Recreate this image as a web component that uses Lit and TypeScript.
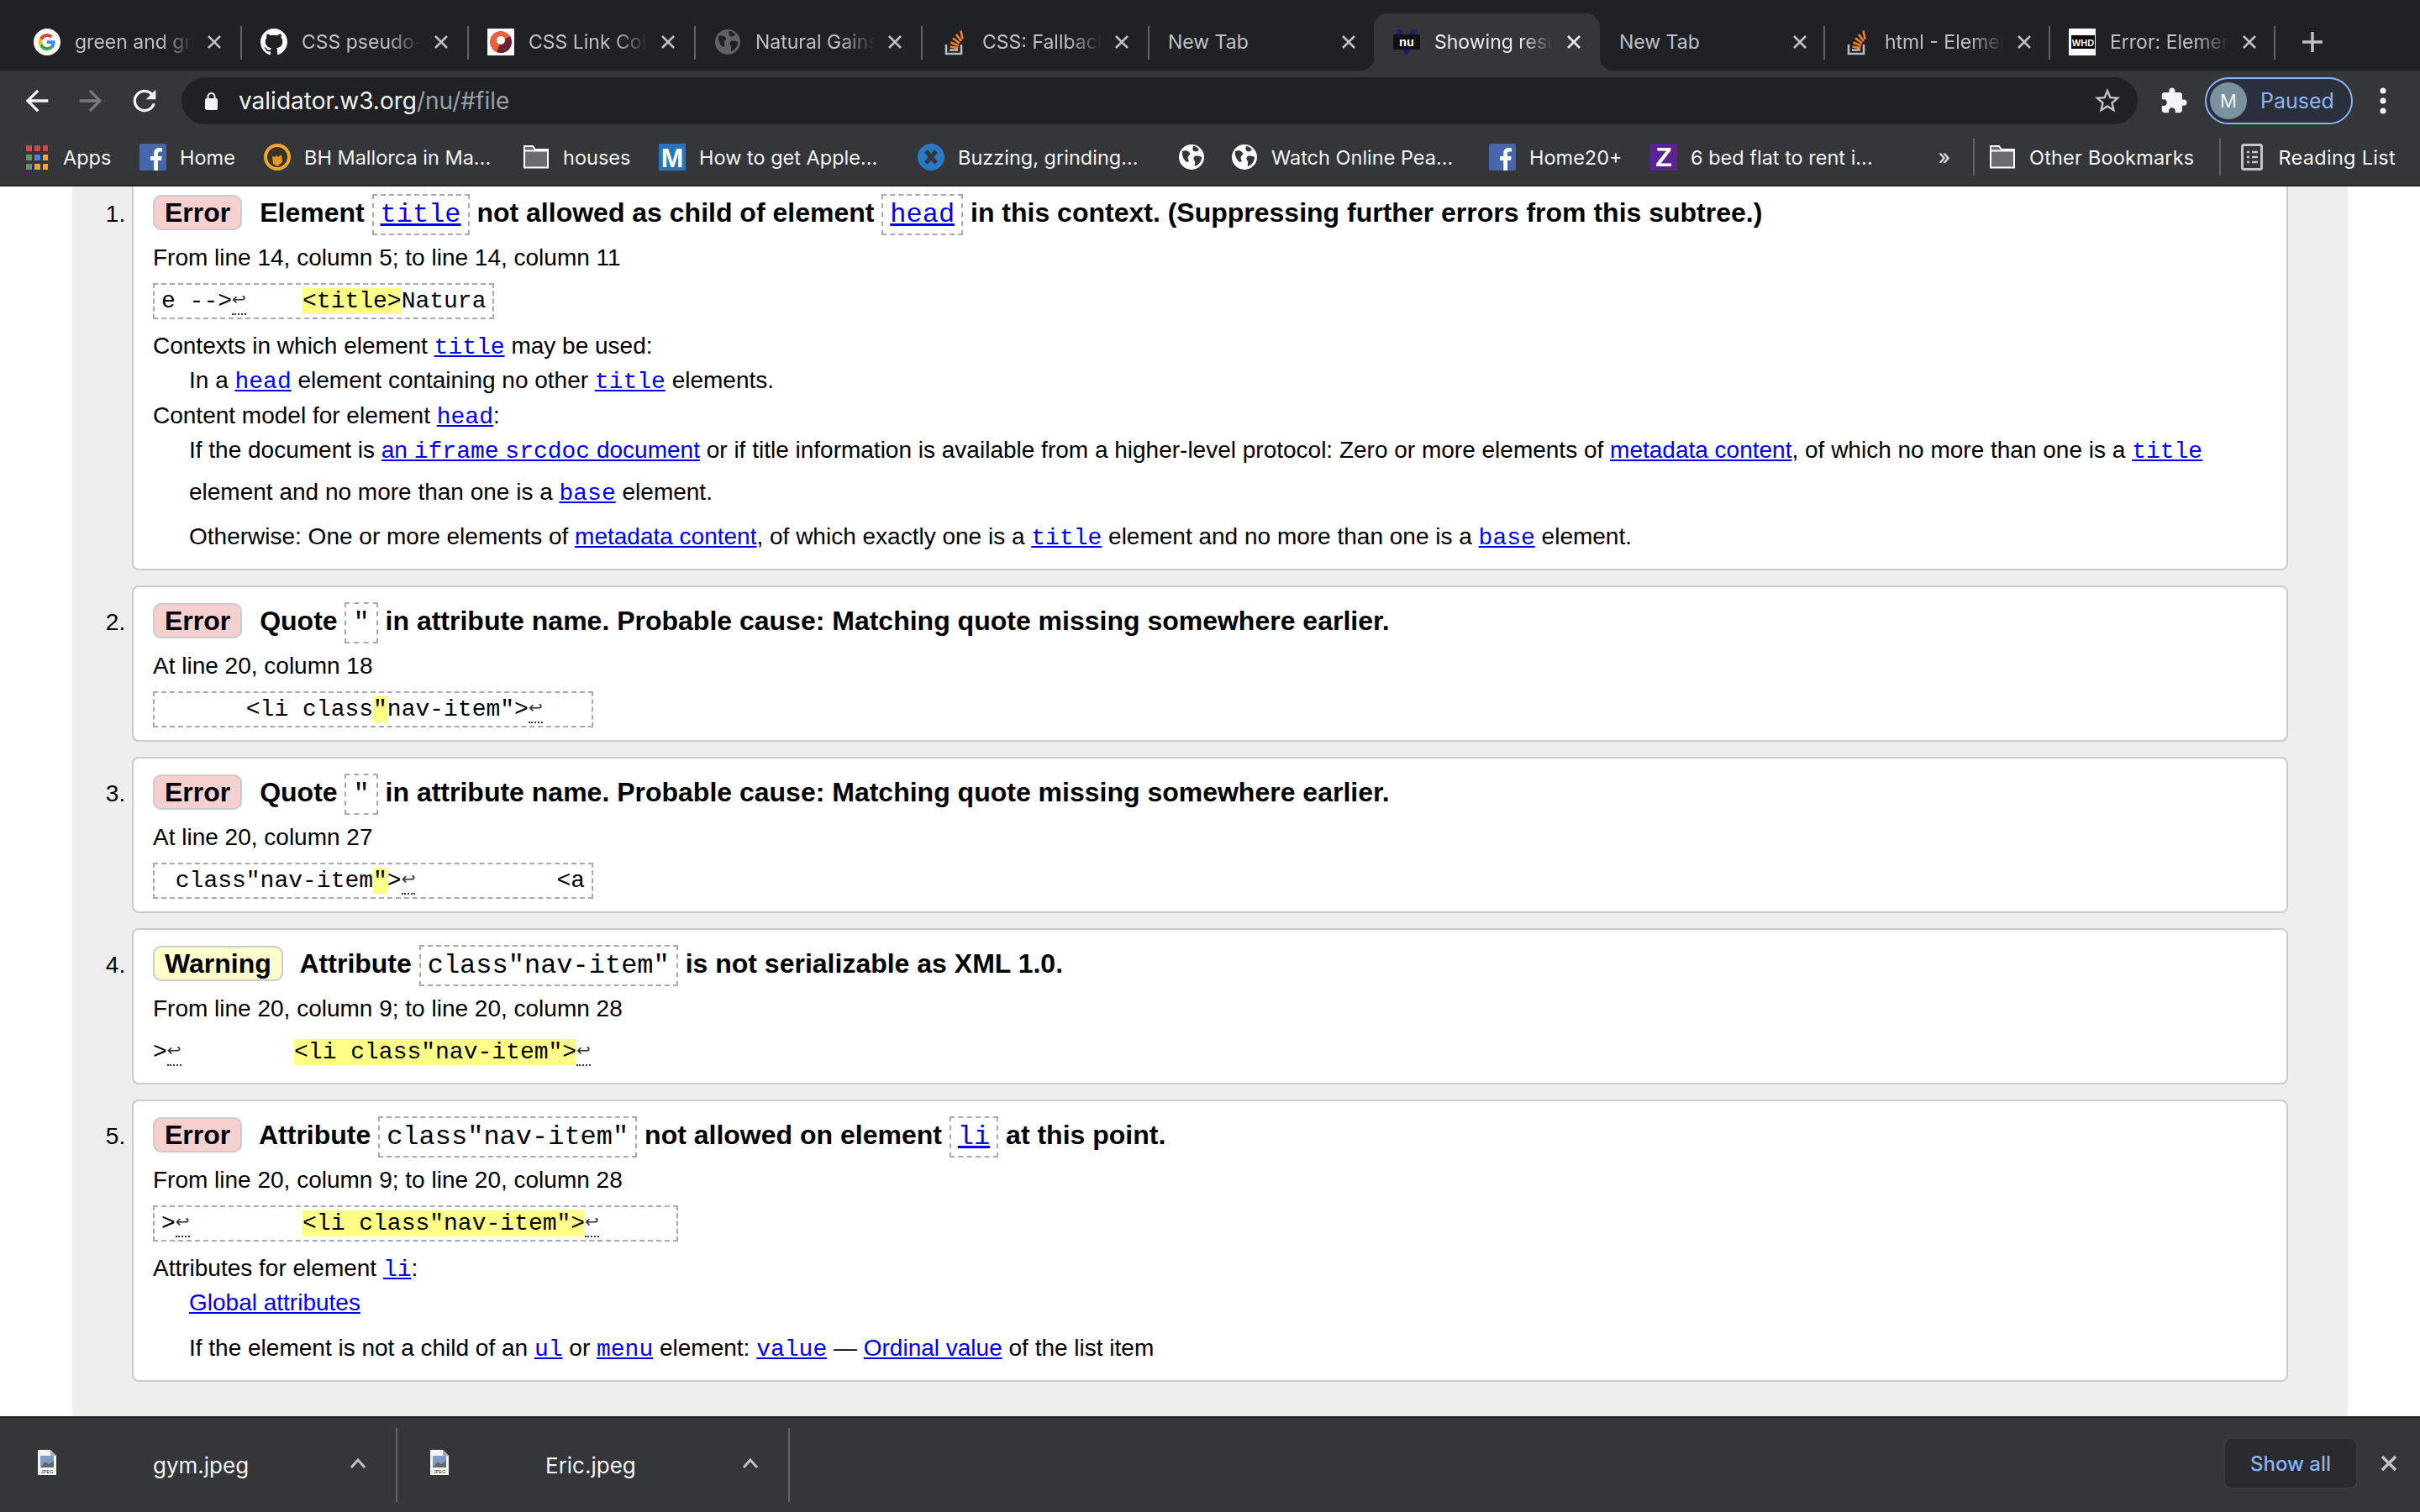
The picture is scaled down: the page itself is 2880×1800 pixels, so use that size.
import { LitElement, html, css, nothing, TemplateResult } from "lit";
import { customElement } from "lit/decorators.js";

const globe = (fill: string, land: string) => html`<svg class="fav" viewBox="0 0 32 32">
  <circle cx="16" cy="16" r="15" fill=${fill}></circle>
  <path d="M5 9c3-1 6-1 8 1 2 2 1 4-1 5-1 2 0 4 1 6l-3 1c-3-3-6-8-5-13zM18 3c3 0 5 2 7 4-1 2-4 3-6 2-2-1-2-4-1-6zM20 15c3-1 6 0 8 1 0 4-2 8-6 10l-2 1c-1-2 1-4 0-6-2-2-2-5 0-6z" fill=${land}></path>
</svg>`;

const fbIcon = html`<svg class="fav" viewBox="0 0 32 32">
  <rect width="32" height="32" rx="2" fill="#4867aa"></rect>
  <path d="M22 32V20h4l.6-5H22v-3c0-1.500.5-2.400 2.500-2.400H27V5.200c-.5-.1-2-.2-3.600-.2-3.600 0-6.100 2.200-6.100 6.200V15H13v5h4.300v12z" fill="#fff"></path>
</svg>`;

const folderIcon = html`<svg class="fav" viewBox="0 0 32 32">
  <path d="M2 7V28.500H30V7H15L12 3H2z" fill="#6b6c6f" stroke="#fff" stroke-width="2"></path>
  <path d="M2 8.500H30" stroke="#fff" stroke-width="2"></path>
</svg>`;

const soIcon = html`<svg class="fav" viewBox="0 0 32 32">
  <path d="M6 19v11h18V19" fill="none" stroke="#bcbbbb" stroke-width="2.600"></path>
  <path d="M10 25.500h10" stroke="#bcbbbb" stroke-width="2.600"></path>
  <path d="M10.500 21.500l9.800 1.600M11.500 16.500l9.200 3.800M14 11.500l8 6M18 7l6 8M23.500 2.500l2 10" fill="none" stroke="#f48024" stroke-width="2.600"></path>
</svg>`;

const tabIcons: Record<string, TemplateResult> = {
  google: html`<svg class="fav" viewBox="0 0 32 32">
    <circle cx="16" cy="16" r="16" fill="#fff"></circle>
    <g transform="translate(6 6) scale(.417)">
      <path fill="#ea4335" d="M24 9.500c3.540 0 6.710 1.220 9.210 3.600l6.850-6.850C35.900 2.380 30.470 0 24 0 14.620 0 6.510 5.380 2.560 13.220l7.980 6.190C12.430 13.720 17.740 9.500 24 9.500z"></path>
      <path fill="#4285f4" d="M46.980 24.550c0-1.570-.15-3.090-.38-4.550H24v9.020h12.940c-.58 2.960-2.260 5.480-4.780 7.180l7.730 6c4.510-4.180 7.090-10.360 7.090-17.650z"></path>
      <path fill="#fbbc05" d="M10.530 28.590c-.48-1.450-.76-2.990-.76-4.590s.27-3.140.76-4.590l-7.980-6.190C.92 16.460 0 20.120 0 24c0 3.880.92 7.540 2.560 10.780l7.970-6.190z"></path>
      <path fill="#34a853" d="M24 48c6.480 0 11.930-2.130 15.890-5.810l-7.730-6c-2.150 1.450-4.920 2.300-8.160 2.300-6.260 0-11.570-4.220-13.470-9.910l-7.980 6.190C6.510 42.620 14.620 48 24 48z"></path>
    </g>
  </svg>`,
  github: html`<svg class="fav" viewBox="0 0 16 16">
    <path fill="#fff" d="M8 0C3.580 0 0 3.580 0 8c0 3.540 2.290 6.530 5.470 7.590.4.070.55-.17.55-.38 0-.19-.01-.82-.01-1.490-2.010.37-2.530-.49-2.690-.94-.09-.23-.48-.94-.82-1.130-.28-.15-.68-.52-.01-.53.63-.01 1.080.58 1.230.82.720 1.210 1.870.87 2.330.66.070-.52.28-.87.51-1.070-1.780-.2-3.640-.89-3.640-3.950 0-.87.31-1.590.82-2.150-.08-.2-.36-1.020.08-2.120 0 0 .67-.21 2.200.82.64-.18 1.320-.27 2-.27.68 0 1.360.09 2 .27 1.530-1.040 2.200-.82 2.200-.82.44 1.100.16 1.920.08 2.120.51.56.82 1.270.82 2.150 0 3.070-1.870 3.750-3.650 3.950.29.25.54.73.54 1.480 0 1.070-.01 1.930-.01 2.200 0 .21.15.46.55.38A8.013 8.013 0 0016 8c0-4.420-3.580-8-8-8z"></path>
  </svg>`,
  ring: html`<svg class="fav" viewBox="0 0 32 32">
    <rect width="32" height="32" fill="#fff"></rect>
    <circle cx="16" cy="16" r="13" fill="#ec5f3d"></circle>
    <path d="M27 9a13 13 0 0 1-16 19l5-12z" fill="#6b2237"></path>
    <circle cx="16" cy="14" r="5" fill="#fff"></circle>
  </svg>`,
  globe: globe("#5f6368", "#202124"),
  so: soIcon,
  nu: html`<svg class="fav" viewBox="0 0 32 32">
    <path d="M3 1h7l6 16 6-16h7L18 31h-4z" fill="#1f2064"></path>
    <rect x="0" y="7" width="32" height="18" rx="2" fill="#101014"></rect>
    <text x="16" y="21" class="nu">nu</text>
  </svg>`,
  whd: html`<svg class="fav" viewBox="0 0 32 32">
    <rect width="32" height="32" fill="#fff"></rect>
    <rect x="3" y="8" width="28" height="16" fill="#000"></rect>
    <text x="17" y="21" class="whd">WHD</text>
  </svg>`,
};

const bookmarkIcons: Record<string, TemplateResult> = {
  apps: html`<svg class="apps" viewBox="0 0 26 32">
    <path fill="#d9453a" d="M0 2h7v7H0zM10 2h7v7h-7zM20 2h6v7h-6z"></path>
    <path fill="#5a9a68" d="M0 13h7v7H0zM0 24h7v7H0z"></path>
    <path fill="#4285f4" d="M10 13h7v7h-7z"></path>
    <path fill="#f0a32f" d="M20 13h6v7h-6zM10 24h7v7h-7zM20 24h6v7h-6z"></path>
  </svg>`,
  fb: fbIcon,
  bh: html`<svg class="fav" viewBox="0 0 32 32">
    <circle cx="16" cy="16" r="14" fill="#3b3329" stroke="#efa92a" stroke-width="4"></circle>
    <path d="M10 15l3 1 2-2 2 2 4-3 1 9-6 5-5-3z" fill="#e29a25"></path>
  </svg>`,
  folder: folderIcon,
  m: html`<svg class="fav" viewBox="0 0 32 32">
    <rect width="32" height="32" fill="#2a74b8"></rect>
    <text x="16" y="28" class="bm">M</text>
  </svg>`,
  x: html`<svg class="fav" viewBox="0 0 32 32">
    <circle cx="16" cy="16" r="16" fill="#2a79c4"></circle>
    <path d="M10 9l12 14M22 9L10 23" stroke="#35363a" stroke-width="5"></path>
  </svg>`,
  globe: globe("#fff", "#35363a"),
  z: html`<svg class="fav" viewBox="0 0 32 32">
    <rect width="32" height="32" fill="#5a2490"></rect>
    <text x="16" y="27" class="bz">Z</text>
  </svg>`,
};

const readingIcon = html`<svg class="fav" viewBox="0 0 26 32">
  <rect x="1.500" y="1.500" width="23" height="29" rx="2" fill="#35363a" stroke="#c4c7c9" stroke-width="3"></rect>
  <path d="M7 10h3M13 10h7M7 16h3M13 16h7M7 22h3M13 22h7" stroke="#c4c7c9" stroke-width="2.500"></path>
</svg>`;

const fileIcon = html`<svg class="file" viewBox="0 0 22 30">
  <path d="M0 0h15l7 7v23H0z" fill="#f4f4f4"></path>
  <path d="M15 0v7h7z" fill="#aaa"></path>
  <rect x="3" y="7" width="16" height="14" fill="#7d9cc4"></rect>
  <path d="M3 21l6-7 4 3 6-4v8z" fill="#666"></path>
  <text x="11" y="28" class="jpeg">JPEG</text>
</svg>`;

const caret = html`<svg class="caret" viewBox="0 0 20 14">
  <path d="M2 12l8-9 8 9" fill="none" stroke="#bdc1c6" stroke-width="3"></path>
</svg>`;

const closeX = html`<svg class="x" viewBox="0 0 22 22">
  <path d="M4 4l14 14M18 4L4 18" fill="none" stroke="currentColor" stroke-width="2.600"></path>
</svg>`;

const TABS = [
  { icon: "google", title: "green and green" },
  { icon: "github", title: "CSS pseudo-classes" },
  { icon: "ring", title: "CSS Link Color" },
  { icon: "globe", title: "Natural Gains" },
  { icon: "so", title: "CSS: Fallback fonts" },
  { title: "New Tab", plain: true },
  { icon: "nu", title: "Showing results", active: true },
  { title: "New Tab", plain: true, sep: true },
  { icon: "so", title: "html - Element" },
  { icon: "whd", title: "Error: Element" },
];

// widths are the distance to the next bookmark, the bar does not wrap
const BOOKMARKS = [
  { icon: "apps", label: "Apps", w: 135 },
  { icon: "fb", label: "Home", w: 148 },
  { icon: "bh", label: "BH Mallorca in Ma...", w: 308 },
  { icon: "folder", label: "houses", w: 162 },
  { icon: "m", label: "How to get Apple...", w: 308 },
  { icon: "x", label: "Buzzing, grinding...", w: 310 },
  { icon: "globe", label: "", w: 63 },
  { icon: "globe", label: "Watch Online Pea...", w: 307 },
  { icon: "fb", label: "Home20+", w: 192 },
  { icon: "z", label: "6 bed flat to rent i...", w: 300 },
];

interface Message {
  kind: "Error" | "Warning";
  text: TemplateResult;
  where: string;
  extract: string;
  plain?: boolean;
  more?: TemplateResult;
}

const c = (t: string) => html`<code class="box">${t}</code>`;
const cl = (t: string) => html`<code class="box"><a href="#">${t}</a></code>`;
const m = (t: string) => html`<a class="mono" href="#">${t}</a>`;
const a = (t: string) => html`<a href="#">${t}</a>`;

const MESSAGES: Message[] = [
  {
    kind: "Error",
    text: html`Element ${cl("title")} not allowed as child of element ${cl("head")} in this context. (Suppressing further errors from this subtree.)`,
    where: "From line 14, column 5; to line 14, column 11",
    extract: "e -->~    {<title>}Natura",
    more: html`
      <div class="dt">Contexts in which element ${m("title")} may be used:</div>
      <div class="dd">In a ${m("head")} element containing no other ${m("title")} elements.</div>
      <div class="dt">Content model for element ${m("head")}:</div>
      <div class="dd tall">If the document is <a href="#">an <span class="mono">iframe</span> <span class="mono">srcdoc</span> document</a> or if title information is available from a higher-level protocol: Zero or more elements of ${a("metadata content")}, of which no more than one is a ${m("title")} element and no more than one is a ${m("base")} element.</div>
      <div class="dd after-tall">Otherwise: One or more elements of ${a("metadata content")}, of which exactly one is a ${m("title")} element and no more than one is a ${m("base")} element.</div>
    `,
  },
  {
    kind: "Error",
    text: html`Quote ${c('"')} in attribute name. Probable cause: Matching quote missing somewhere earlier.`,
    where: "At line 20, column 18",
    extract: '      <li class{"}nav-item">~   ',
  },
  {
    kind: "Error",
    text: html`Quote ${c('"')} in attribute name. Probable cause: Matching quote missing somewhere earlier.`,
    where: "At line 20, column 27",
    extract: ' class"nav-item{"}>~          <a',
  },
  {
    kind: "Warning",
    text: html`Attribute ${c('class"nav-item"')} is not serializable as XML 1.0.`,
    where: "From line 20, column 9; to line 20, column 28",
    extract: '>~        {<li class"nav-item">}~',
    plain: true,
  },
  {
    kind: "Error",
    text: html`Attribute ${c('class"nav-item"')} not allowed on element ${cl("li")} at this point.`,
    where: "From line 20, column 9; to line 20, column 28",
    extract: '>~        {<li class"nav-item">}~     ',
    more: html`
      <div class="dt">Attributes for element ${m("li")}:</div>
      <div class="dd">${a("Global attributes")}</div>
      <div class="dd spaced">If the element is not a child of an ${m("ul")} or ${m("menu")} element: ${m("value")} — ${a("Ordinal value")} of the list item</div>
    `,
  },
];

@customElement("app-root")
export class AppRoot extends LitElement {
  static styles = css`
    :host {
      display: flex;
      flex-direction: column;
      height: 100vh;
      overflow: hidden;
      font-family: "Liberation Sans", Arial, sans-serif;
      background: #fff;
    }

    /* browser chrome */
    .tabstrip,
    .toolbar,
    .bookmarks,
    .downloads {
      flex: none;
      display: flex;
      font-family: Inter, "Liberation Sans", sans-serif;
    }
    .tabstrip {
      height: 84px;
      box-sizing: border-box;
      padding: 16px 0 0 17px;
      background: #202124;
      font-size: 23px;
      color: #bdc1c6;
    }
    .tab {
      flex: 0 0 268px;
      position: relative;
      display: flex;
      align-items: center;
      padding-left: 23px;
      box-sizing: border-box;
    }
    .tab:nth-child(-n + 5) {
      flex-basis: 270px;
    }
    .tab:nth-child(8) {
      flex-basis: 267px;
    }
    .tab.sep::after {
      content: "";
      position: absolute;
      right: -1px;
      top: 15px;
      bottom: 13px;
      width: 2px;
      background: #5f6368;
    }
    .tab.active {
      flex-basis: 269px;
      background: #35363a;
      border-radius: 16px 16px 0 0;
      color: #e8eaed;
    }
    .tab.active::before,
    .tab.active::after {
      content: "";
      position: absolute;
      bottom: 0;
      width: 16px;
      height: 16px;
    }
    .tab.active::before {
      left: -16px;
      background: radial-gradient(circle at 0 0, transparent 16px, #35363a 16.5px);
    }
    .tab.active::after {
      right: -16px;
      background: radial-gradient(circle at 100% 0, transparent 16px, #35363a 16.5px);
    }
    .fav {
      flex: none;
      width: 32px;
      height: 32px;
    }
    .tab .fav {
      margin-right: 17px;
    }
    .tab-title {
      width: 142px;
      white-space: nowrap;
      overflow: hidden;
      -webkit-mask-image: linear-gradient(to right, #000 72%, transparent 100%);
      mask-image: linear-gradient(to right, #000 72%, transparent 100%);
    }
    .tab.plain .tab-title {
      width: 191px;
      -webkit-mask-image: none;
      mask-image: none;
    }
    .x {
      flex: none;
      width: 22px;
      height: 22px;
      margin-left: 13px;
    }
    .plus {
      width: 28px;
      height: 28px;
      margin: 20px 0 0 31px;
    }
    .nu {
      font: bold 15px "Liberation Mono", monospace;
      fill: #fff;
      text-anchor: middle;
    }
    .whd {
      font: bold 11px "Liberation Sans", sans-serif;
      fill: #fff;
      text-anchor: middle;
    }
    .bm {
      font: bold 32px "Liberation Sans", sans-serif;
      fill: #fff;
      text-anchor: middle;
    }
    .bz {
      font: bold 32px "Liberation Sans", sans-serif;
      fill: #fff;
      text-anchor: middle;
    }
    .jpeg {
      font: 5.500px "Liberation Sans", sans-serif;
      fill: #333;
      text-anchor: middle;
    }

    .toolbar {
      height: 72px;
      box-sizing: border-box;
      padding: 8px 40px 8px 24px;
      align-items: stretch;
      background: #35363a;
    }
    .nav {
      width: 40px;
      height: 40px;
      align-self: center;
      margin-right: 24px;
      fill: #f1f3f4;
    }
    .nav.off {
      fill: #77797d;
    }
    .omnibox {
      flex: 1;
      display: flex;
      align-items: center;
      padding: 0 18px 0 28px;
      border-radius: 28px;
      background: #202124;
      font-size: 28px;
      color: #f1f3f4;
    }
    .lock {
      width: 15px;
      height: 22px;
      margin-right: 25px;
    }
    .host-path {
      color: #9aa0a6;
    }
    .star {
      width: 36px;
      height: 36px;
      margin-left: auto;
      fill: #bdc1c6;
    }
    .puzzle {
      width: 34px;
      height: 34px;
      align-self: center;
      margin: 0 20px 0 26px;
      fill: #f1f3f4;
    }
    .profile {
      width: 176px;
      box-sizing: border-box;
      display: flex;
      align-items: center;
      gap: 16px;
      padding-left: 4px;
      border: 2px solid #8ab4f8;
      border-radius: 28px;
      background: #2b2f3b;
      font-size: 25px;
      color: #8ab4f8;
    }
    .avatar {
      width: 44px;
      height: 44px;
      border-radius: 50%;
      background: #7b919e;
      color: #eef2f4;
      font-size: 22px;
      display: flex;
      align-items: center;
      justify-content: center;
    }
    .kebab {
      width: 8px;
      height: 32px;
      align-self: center;
      margin-left: 32px;
      fill: #f1f3f4;
    }

    .bookmarks {
      height: 66px;
      box-sizing: border-box;
      padding: 0 29px 2px 31px;
      align-items: center;
      background: #35363a;
      border-bottom: 2px solid #202124;
      font-size: 23.5px;
      color: #f1f3f4;
    }
    .bookmark {
      flex: none;
      display: flex;
      align-items: center;
      gap: 16px;
      white-space: nowrap;
    }
    .apps {
      width: 26px;
      height: 32px;
    }
    .bookmark .apps {
      margin-right: 2px;
    }
    .chevrons {
      margin-left: auto;
      font-size: 25px;
      color: #e8eaed;
    }
    .vsep {
      width: 2px;
      height: 44px;
      background: #5f6368;
    }
    .chevrons + .vsep {
      margin-left: 27px;
    }
    .bookmark.other {
      margin: 0 30px 0 17px;
      letter-spacing: 0.2px;
    }
    .bookmark.reading {
      margin-left: 24px;
      letter-spacing: 0.3px;
    }
    .bookmark.reading .fav {
      width: 26px;
      margin-right: 2px;
    }

    /* page */
    .viewport {
      flex: 1;
      min-height: 0;
      overflow: hidden;
    }
    .sheet {
      height: 100%;
      margin: 0 86px;
      background: #eee;
      overflow: hidden;
    }
    ol {
      margin: -11px 71px 0;
      padding: 0;
      font-size: 28px;
      line-height: 42px;
      color: #000;
    }
    li {
      margin-bottom: 18px;
      padding: 16px 24px 15px 23px;
      background: #fff;
      border: 2px solid #ccc;
      border-radius: 8px;
    }
    a {
      color: #00e;
    }
    .msg {
      margin: 0;
      height: 48px;
      font-size: 32px;
      font-weight: bold;
      line-height: 48px;
      white-space: nowrap;
    }
    .badge {
      margin-right: 12px;
      padding: 1px 12px;
      border: 2px solid #ccc;
      border-radius: 10px;
    }
    .badge.error {
      background: #f6cfcf;
    }
    .badge.warning {
      background: #ffc;
    }
    code,
    .mono {
      font-family: "Liberation Mono", "Courier New", monospace;
    }
    .mono {
      line-height: 0;
    }
    .box {
      padding: 4px 8px;
      border: 2px dashed #aaa;
      font-size: 32px;
      font-weight: normal;
    }
    .where {
      margin: 9px 0 0;
    }
    .extract {
      display: block;
      width: fit-content;
      box-sizing: border-box;
      height: 43px;
      margin-top: 9px;
      padding: 3px 8px;
      border: 2px dashed #aaa;
      font-size: 28px;
      line-height: 33px;
      white-space: pre;
    }
    .extract.plain {
      height: 42px;
      margin-bottom: 1px;
      padding: 5px 0;
      border: none;
    }
    .extract b {
      font-weight: normal;
      background: #ff8;
    }
    .lf {
      display: inline-block;
      width: 16.8px;
      height: 31px;
      line-height: 29px;
      vertical-align: bottom;
      overflow: hidden;
      text-align: center;
      font-family: "DejaVu Sans", sans-serif;
      font-size: 20px;
      border-bottom: 2px dotted #333;
      color: #333;
    }
    .more {
      margin: 11px 0 2px;
    }
    .dt {
      line-height: 41px;
    }
    .dd {
      padding-left: 43px;
    }
    .dd.tall {
      margin-top: -4px;
      line-height: 50px;
    }
    .dd.after-tall {
      margin-top: 7px;
    }
    .dd.spaced {
      margin-top: 12px;
    }

    /* download shelf */
    .downloads {
      height: 114px;
      box-sizing: border-box;
      padding: 0 27px 0 6px;
      align-items: center;
      background: #35363a;
      border-top: 2px solid #202124;
      font-size: 26px;
      color: #f1f3f4;
    }
    .download {
      width: 467px;
      height: 88px;
      box-sizing: border-box;
      display: flex;
      align-items: center;
      padding-left: 39px;
      border-right: 2px solid #5f6368;
    }
    .file {
      width: 22px;
      height: 30px;
      margin: -6px 115px 0 0;
    }
    .caret {
      width: 20px;
      height: 14px;
      margin: -4px 35px 0 auto;
    }
    .show-all {
      margin: 0 0 4px auto;
      width: 160px;
      height: 62px;
      box-sizing: border-box;
      display: flex;
      align-items: center;
      justify-content: center;
      border: 2px solid #3a3b3f;
      border-radius: 10px;
      background: #292a2d;
      font-size: 24px;
      font-weight: 500;
      color: #8ab4f8;
    }
    .shelf-close {
      width: 20px;
      height: 20px;
      margin: 0 0 4px 27px;
      color: #c4c4c4;
    }
  `;

  renderExtract(src: string) {
    return src.split(/(\{[^}]*\}|~)/).map((part) => {
      if (part === "~") return html`<span class="lf">↩</span>`;
      if (part.startsWith("{")) return html`<b>${part.slice(1, -1)}</b>`;
      return part;
    });
  }

  renderChrome() {
    return html`
      <div class="tabstrip">
        ${TABS.map((t, i) => html`
          <div class="tab ${t.active ? "active" : ""} ${t.plain ? "plain" : ""} ${(i < 5 || i > 6) ? "sep" : ""}">
            ${t.icon ? tabIcons[t.icon] : nothing}
            <span class="tab-title">${t.title}</span>
            ${closeX}
          </div>
        `)}
        <svg class="plus" viewBox="0 0 28 28"><path d="M14 2v24M2 14h24" stroke="#bdc1c6" stroke-width="3.500"></path></svg>
      </div>
      <div class="toolbar">
        <svg class="nav" viewBox="0 0 24 24"><path d="M20 11H7.830l5.590-5.590L12 4l-8 8 8 8 1.410-1.410L7.830 13H20v-2z"></path></svg>
        <svg class="nav off" viewBox="0 0 24 24"><path d="M12 4l-1.410 1.410L16.170 11H4v2h12.170l-5.580 5.590L12 20l8-8z"></path></svg>
        <svg class="nav" viewBox="0 0 24 24"><path d="M17.650 6.350A7.958 7.958 0 0012 4c-4.420 0-7.990 3.580-7.990 8s3.570 8 7.990 8c3.730 0 6.840-2.550 7.730-6h-2.080A5.990 5.990 0 0112 18c-3.310 0-6-2.690-6-6s2.690-6 6-6c1.660 0 3.140.69 4.220 1.780L13 11h7V4l-2.350 2.350z"></path></svg>
        <div class="omnibox">
          <svg class="lock" viewBox="0 0 15 22"><path d="M3.500 10V6a4 4 0 0 1 8 0v4" fill="none" stroke="#f1f3f4" stroke-width="2"></path><rect y="8" width="15" height="14" rx="2" fill="#f1f3f4"></rect></svg>
          <span>validator.w3.org<span class="host-path">/nu/#file</span></span>
          <svg class="star" viewBox="0 0 24 24"><path d="M22 9.240l-7.190-.62L12 2 9.190 8.630 2 9.240l5.460 4.730L5.820 21 12 17.270 18.180 21l-1.630-7.030L22 9.240zM12 15.400l-3.760 2.270 1-4.280-3.320-2.880 4.380-.38L12 6.100l1.710 4.040 4.380.38-3.320 2.880 1 4.280L12 15.400z"></path></svg>
        </div>
        <svg class="puzzle" viewBox="0 0 24 24"><path d="M20.500 11H19V7c0-1.100-.9-2-2-2h-4V3.500C13 2.120 11.880 1 10.500 1S8 2.120 8 3.500V5H4c-1.100 0-1.990.9-1.990 2v3.800H3.500c1.490 0 2.700 1.210 2.700 2.700s-1.210 2.700-2.700 2.700H2V20c0 1.100.9 2 2 2h3.800v-1.500c0-1.490 1.210-2.700 2.700-2.700 1.490 0 2.700 1.210 2.700 2.700V22H17c1.100 0 2-.9 2-2v-4h1.500c1.380 0 2.500-1.120 2.500-2.500S21.880 11 20.500 11z"></path></svg>
        <div class="profile"><span class="avatar">M</span>Paused</div>
        <svg class="kebab" viewBox="0 0 8 32"><circle cx="4" cy="4" r="3.500"></circle><circle cx="4" cy="16" r="3.500"></circle><circle cx="4" cy="28" r="3.500"></circle></svg>
      </div>
      <div class="bookmarks">
        ${BOOKMARKS.map((b) => html`
          <div class="bookmark" style="width:${b.w}px">
            ${bookmarkIcons[b.icon]}${b.label ? html`<span>${b.label}</span>` : nothing}
          </div>
        `)}
        <span class="chevrons">»</span>
        <span class="vsep"></span>
        <div class="bookmark other">${folderIcon}<span>Other Bookmarks</span></div>
        <span class="vsep"></span>
        <div class="bookmark reading">${readingIcon}<span>Reading List</span></div>
      </div>
    `;
  }

  render() {
    return html`
      ${this.renderChrome()}
      <div class="viewport">
        <div class="sheet">
          <ol>
            ${MESSAGES.map((msg) => html`
              <li>
                <p class="msg"><span class="badge ${msg.kind.toLowerCase()}">${msg.kind}</span> ${msg.text}</p>
                <p class="where">${msg.where}</p>
                <code class="extract ${msg.plain ? "plain" : ""}">${this.renderExtract(msg.extract)}</code>
                ${msg.more ? html`<div class="more">${msg.more}</div>` : nothing}
              </li>
            `)}
          </ol>
        </div>
      </div>
      <div class="downloads">
        <div class="download">${fileIcon}<span>gym.jpeg</span>${caret}</div>
        <div class="download">${fileIcon}<span>Eric.jpeg</span>${caret}</div>
        <div class="show-all">Show all</div>
        <svg class="shelf-close" viewBox="0 0 20 20"><path d="M2 2l16 16M18 2L2 18" stroke="currentColor" stroke-width="3.500"></path></svg>
      </div>
    `;
  }
}
